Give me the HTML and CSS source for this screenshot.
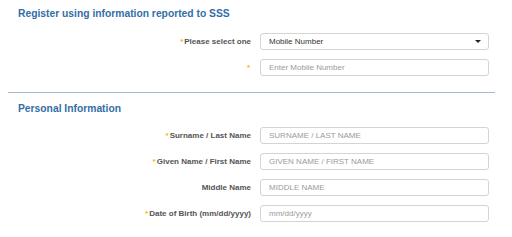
FILE: index.html
```html
<!DOCTYPE html>
<html lang="en">
<head>
  <meta charset="UTF-8" />
  <meta name="viewport" content="width=device-width, initial-scale=1.0"/>
  <title>Register</title>
  <link rel="stylesheet" href="styles.css">
</head>
<body>
  <div class="container">
    <h2 class="section-title first">Register using information reported to SSS</h2>
    <div class="row">
      <label><span class="req">*</span>Please select one</label>
      <div class="select-box"><span>Mobile Number</span><span class="caret"></span></div>
    </div>
    <div class="row">
      <label><span class="req">*</span></label>
      <input type="text" placeholder="Enter Mobile Number">
    </div>

    <div class="divider"></div>

    <h2 class="section-title">Personal Information</h2>
    <div class="row">
      <label><span class="req">*</span>Surname / Last Name</label>
      <input type="text" placeholder="SURNAME / LAST NAME">
    </div>
    <div class="row">
      <label><span class="req">*</span>Given Name / First Name</label>
      <input type="text" placeholder="GIVEN NAME / FIRST NAME">
    </div>
    <div class="row">
      <label>Middle Name</label>
      <input type="text" placeholder="MIDDLE NAME">
    </div>
    <div class="row">
      <label><span class="req">*</span>Date of Birth (mm/dd/yyyy)</label>
      <input type="text" placeholder="mm/dd/yyyy">
    </div>
  </div>
</body>
</html>
```

FILE: styles.css
```css
body {
  margin: 0;
  background: #fff;
  font-family: "Liberation Sans", Arial, sans-serif;
}
.container {
  width: 495px;
  padding-top: 1px;
}
.section-title {
  margin: 9px 0 11px 18px;
  font-size: 10.3px;
  line-height: 14px;
  font-weight: bold;
  color: #336ea6;
}
.section-title.first {
  margin-top: 6px;
  margin-bottom: 12px;
}
.row {
  display: grid;
  grid-template-columns: 251px 229px;
  column-gap: 9px;
  align-items: center;
  height: 17px;
  margin-bottom: 9px;
}
.row label {
  text-align: right;
  font-size: 8px;
  font-weight: bold;
  color: #555;
}
.req {
  color: #f2b705;
  margin-right: 1px;
}
.row input,
.select-box {
  box-sizing: border-box;
  height: 17px;
  width: 229px;
  margin: 0;
  padding: 0 8px;
  border: 1px solid #d4d4d4;
  border-radius: 3px;
  font-family: "Liberation Sans", Arial, sans-serif;
  font-size: 8px;
  color: #333;
  background: #fff;
  outline: none;
}
.row input::placeholder {
  color: #9a9a9a;
}
.select-box {
  display: flex;
  align-items: center;
  justify-content: space-between;
}
.caret {
  width: 0;
  height: 0;
  border-left: 3px solid transparent;
  border-right: 3px solid transparent;
  border-top: 3px solid #222;
  margin-right: -1px;
}
.divider {
  margin: 16px 0 0 8px;
  border-top: 1px solid #a9b8c8;
}
```
